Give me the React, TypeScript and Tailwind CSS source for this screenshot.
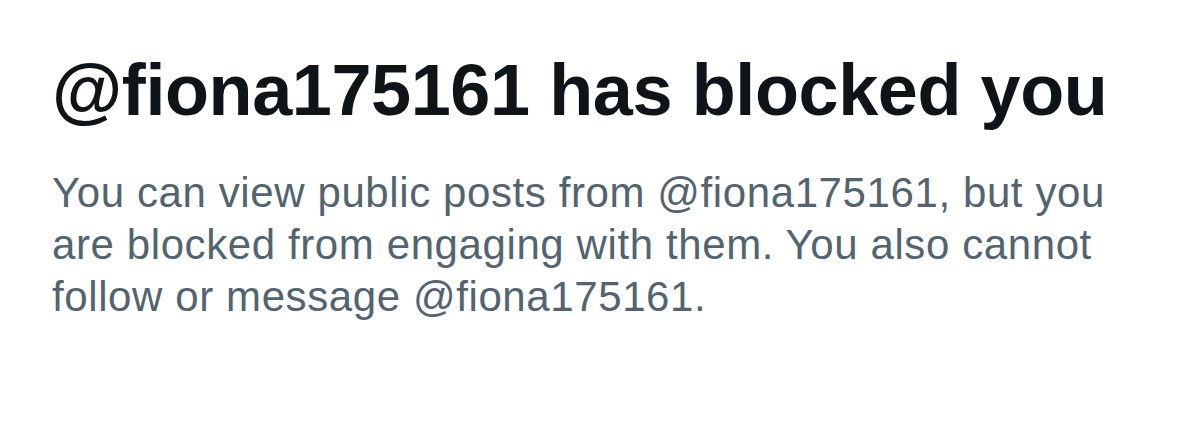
export default function App() {
  return (
    <div className="w-[1199px] h-[421px] bg-white overflow-hidden font-['Liberation_Sans',Arial,sans-serif]">
      <div className="pl-[52px] pt-[48px]">
        <h1 className="text-[72px] leading-[84px] font-bold text-[#0f1419] tracking-[-0.4px] whitespace-nowrap">
          @fiona175161 has blocked you
        </h1>
        <p className="mt-[35px] text-[42px] leading-[52px] text-[#536471] tracking-[0.6px] whitespace-nowrap">
          You can view public posts from @fiona175161, but you
          <br />
          are blocked from engaging with them. You also cannot
          <br />
          follow or message @fiona175161.
        </p>
      </div>
    </div>
  );
}
